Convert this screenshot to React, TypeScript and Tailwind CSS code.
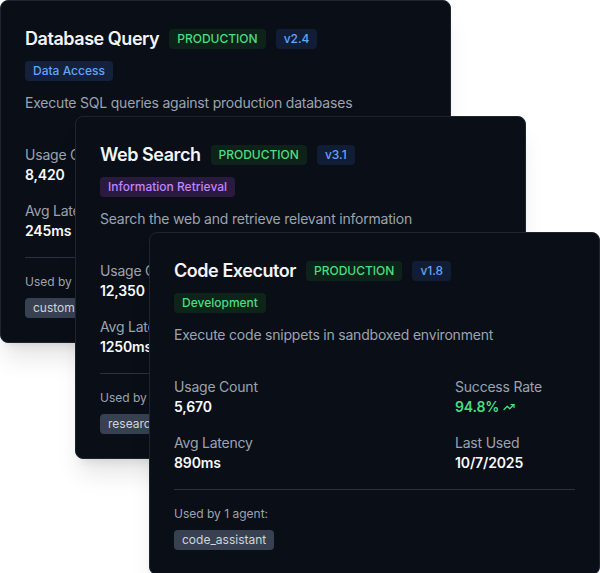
import { TrendingUp } from "lucide-react"

type Tool = {
  name: string
  version: string
  category: string
  categoryClass: string
  description: string
  usage: string
  latency: string
  successRate: string
  lastUsed: string
  agents: string[]
  left: string
  top: string
  z: string
}

const tools: Tool[] = [
  {
    name: "Database Query",
    version: "v2.4",
    category: "Data Access",
    categoryClass: "bg-[#13213d] text-[#60a5fa]",
    description: "Execute SQL queries against production databases",
    usage: "8,420",
    latency: "245ms",
    successRate: "99.1%",
    lastUsed: "10/8/2025",
    agents: ["customer_support", "analytics_bot"],
    left: "left-0",
    top: "top-0",
    z: "z-10",
  },
  {
    name: "Web Search",
    version: "v3.1",
    category: "Information Retrieval",
    categoryClass: "bg-[#2a1a40] text-[#c084fc]",
    description: "Search the web and retrieve relevant information",
    usage: "12,350",
    latency: "1250ms",
    successRate: "97.3%",
    lastUsed: "10/8/2025",
    agents: ["research_assistant"],
    left: "left-[75px]",
    top: "top-[116px]",
    z: "z-20",
  },
  {
    name: "Code Executor",
    version: "v1.8",
    category: "Development",
    categoryClass: "bg-[#0e2419] text-[#4ade80]",
    description: "Execute code snippets in sandboxed environment",
    usage: "5,670",
    latency: "890ms",
    successRate: "94.8%",
    lastUsed: "10/7/2025",
    agents: ["code_assistant"],
    left: "left-[149px]",
    top: "top-[232px]",
    z: "z-30",
  },
]

function Stat({ label, children, className = "text-[#f9fafb]" }: { label: string; children: React.ReactNode; className?: string }) {
  return (
    <div>
      <p className="text-sm tracking-[-0.015em] text-[#9ca3af]">{label}</p>
      <p className={`text-sm font-semibold tracking-[-0.01em] flex items-center gap-1 ${className}`}>{children}</p>
    </div>
  )
}

function ToolCard({ t }: { t: Tool }) {
  return (
    <div className={`absolute ${t.left} ${t.top} ${t.z} w-[451px] bg-[#0a0e17] border border-[#1e2430] rounded-lg p-6 shadow-xl`}>
      <div className="flex items-center gap-2.5 h-7 mb-2">
        <h3 className="text-lg font-semibold tracking-[-0.025em] text-[#f3f4f6]">{t.name}</h3>
        <span className="text-xs font-medium px-2 py-0.5 rounded bg-[#0d2218] text-[#4ade80]">PRODUCTION</span>
        <span className="text-xs font-medium px-2 py-0.5 rounded bg-[#111d35] text-[#60a5fa]">{t.version}</span>
      </div>
      <div className="flex mb-3">
        <span className={`text-xs font-medium px-2 py-0.5 rounded ${t.categoryClass}`}>{t.category}</span>
      </div>
      <p className="text-sm tracking-[-0.015em] text-[#9ca3af] mb-8">{t.description}</p>

      <div className="grid grid-cols-[1fr_120px] gap-y-4">
        <Stat label="Usage Count">{t.usage}</Stat>
        <Stat label="Success Rate" className="text-[#4ade80]">
          {t.successRate}
          <TrendingUp className="w-3 h-3" strokeWidth={2.5} />
        </Stat>
        <Stat label="Avg Latency">{t.latency}</Stat>
        <Stat label="Last Used">{t.lastUsed}</Stat>
      </div>

      <div className="mt-4 pt-4 border-t border-[#2a3140]">
        <p className="text-xs text-[#9ca3af] mb-2">
          Used by {t.agents.length} agent{t.agents.length > 1 ? "s" : ""}:
        </p>
        <div className="flex flex-wrap gap-2">
          {t.agents.map(a => (
            <span key={a} className="text-xs px-2 py-0.5 rounded bg-[#374151] text-[#d1d5db]">{a}</span>
          ))}
        </div>
      </div>
    </div>
  )
}

export default function App() {
  return (
    <div className="relative w-[600px] h-[573px] bg-white overflow-hidden" style={{ fontFamily: "Inter, 'Noto Sans', sans-serif" }}>
      {tools.map(t => <ToolCard key={t.name} t={t} />)}
    </div>
  )
}
